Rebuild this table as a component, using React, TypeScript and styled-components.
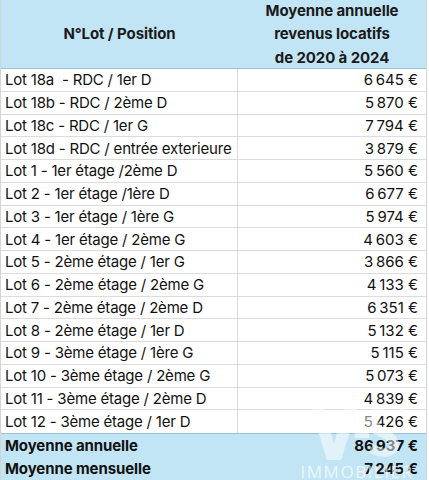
import React from "react";
import styled, { createGlobalStyle } from "styled-components";

const Global = createGlobalStyle`
  html, body { margin: 0; padding: 0; background: #ffffff; }
  body { font-family: "Inter", "Noto Sans", "Liberation Sans", sans-serif; color: #111111; }
`;

const Sheet = styled.div`
  position: relative;
  width: 427px;
  height: 480px;
  overflow: hidden;
  border-left: 1px solid #d4d4d4;
  border-right: 1px solid #d4d4d4;
  box-sizing: border-box;
`;

const Grid = styled.div`
  display: grid;
  grid-template-columns: 237px 1fr;
`;

const HeadCell = styled.div`
  background: #c2e5f5;
  height: 68px;
  border-bottom: 1px solid #98c3d6;
  display: flex;
  flex-direction: column;
  align-items: center;
  justify-content: center;
  font-weight: 700;
  font-size: 15px;
  line-height: 23.5px;
  letter-spacing: -0.1px;
  color: #1a1a1a;
`;

const Cell = styled.div<{ $num?: boolean; $last?: boolean }>`
  height: 22.75px;
  box-sizing: border-box;
  border-bottom: ${(p) => (p.$last ? "none" : "1px solid #dcdcdc")};
  border-right: ${(p) => (p.$num ? "none" : "1px solid #dcdcdc")};
  display: flex;
  align-items: center;
  justify-content: ${(p) => (p.$num ? "flex-end" : "flex-start")};
  padding: ${(p) => (p.$num ? "0 8px 0 0" : "0 0 0 4px")};
  font-size: 15px;
  white-space: pre;
  letter-spacing: -0.2px;
`;

const FootCell = styled.div<{ $num?: boolean; $first?: boolean }>`
  background: #c2e5f5;
  height: 23.5px;
  box-sizing: border-box;
  border-top: ${(p) => (p.$first ? "1px solid #98c3d6" : "none")};
  display: flex;
  align-items: center;
  justify-content: ${(p) => (p.$num ? "flex-end" : "flex-start")};
  padding: ${(p) => (p.$num ? "0 8px 0 0" : "0 0 0 4px")};
  font-size: 15px;
  font-weight: 700;
  letter-spacing: -0.1px;
  white-space: pre;
`;

const Watermark = styled.div`
  position: absolute;
  right: -6px;
  bottom: -4px;
  width: 150px;
  height: 80px;
  pointer-events: none;
  display: flex;
  flex-direction: column;
  align-items: center;
`;

const WmText = styled.div`
  font-family: "Open Sans", "Liberation Sans", sans-serif;
  font-size: 17px;
  letter-spacing: 1.5px;
  color: rgba(255, 255, 255, 0.7);
  margin-top: -6px;
`;

const n = (s: string) => s.replace(" ", "\u202F").replace(" €", "\u00A0€");

const rows: [string, string][] = [
  ["Lot 18a  - RDC / 1er D", "6 645 €"],
  ["Lot 18b - RDC / 2ème D", "5 870 €"],
  ["Lot 18c - RDC / 1er G", "7 794 €"],
  ["Lot 18d - RDC / entrée exterieure", "3 879 €"],
  ["Lot 1 - 1er étage /2ème D", "5 560 €"],
  ["Lot 2 - 1er étage /1ère D", "6 677 €"],
  ["Lot 3 - 1er étage / 1ère G", "5 974 €"],
  ["Lot 4 - 1er étage / 2ème G", "4 603 €"],
  ["Lot 5 - 2ème étage / 1er G", "3 866 €"],
  ["Lot 6 - 2ème étage / 2ème G", "4 133 €"],
  ["Lot 7 - 2ème étage / 2ème D", "6 351 €"],
  ["Lot 8 - 2ème étage / 1er D", "5 132 €"],
  ["Lot 9 - 3ème étage / 1ère G", "5 115 €"],
  ["Lot 10 - 3ème étage / 2ème G", "5 073 €"],
  ["Lot 11 - 3ème étage / 2ème D", "4 839 €"],
  ["Lot 12 - 3ème étage / 1er D", "5 426 €"],
];

export default function App() {
  return (
    <>
      <Global />
      <Sheet>
        <Grid>
          <HeadCell>N°Lot / Position</HeadCell>
          <HeadCell>
            <span>Moyenne annuelle</span>
            <span>revenus locatifs</span>
            <span>de 2020 à 2024</span>
          </HeadCell>
          {rows.map(([label, value], i) => (
            <React.Fragment key={label}>
              <Cell $last={i === rows.length - 1}>{label}</Cell>
              <Cell $num $last={i === rows.length - 1}>
                {n(value)}
              </Cell>
            </React.Fragment>
          ))}
          <FootCell $first>Moyenne annuelle</FootCell>
          <FootCell $first $num>
            {n("86 937 €")}
          </FootCell>
          <FootCell>Moyenne mensuelle</FootCell>
          <FootCell $num>{n("7 245 €")}</FootCell>
        </Grid>
        <Watermark>
          <svg width="120" height="62" viewBox="0 0 120 62">
            <path
              d="M14 4 L30 56 L44 56 L60 4 L47 4 L37 40 L27 4 Z"
              fill="rgba(255,255,255,0.5)"
            />
            <rect x="58" y="26" width="14" height="8" fill="rgba(255,255,255,0.5)" />
            <path
              d="M108 8 C100 3 84 2 80 12 C76 24 104 26 102 42 C100 54 82 56 72 48 L76 40 C84 46 92 46 92 40 C92 32 66 32 68 16 C70 2 96 -2 110 6 Z"
              fill="rgba(255,255,255,0.5)"
            />
          </svg>
          <WmText>IMMOBILIER</WmText>
        </Watermark>
      </Sheet>
    </>
  );
}
